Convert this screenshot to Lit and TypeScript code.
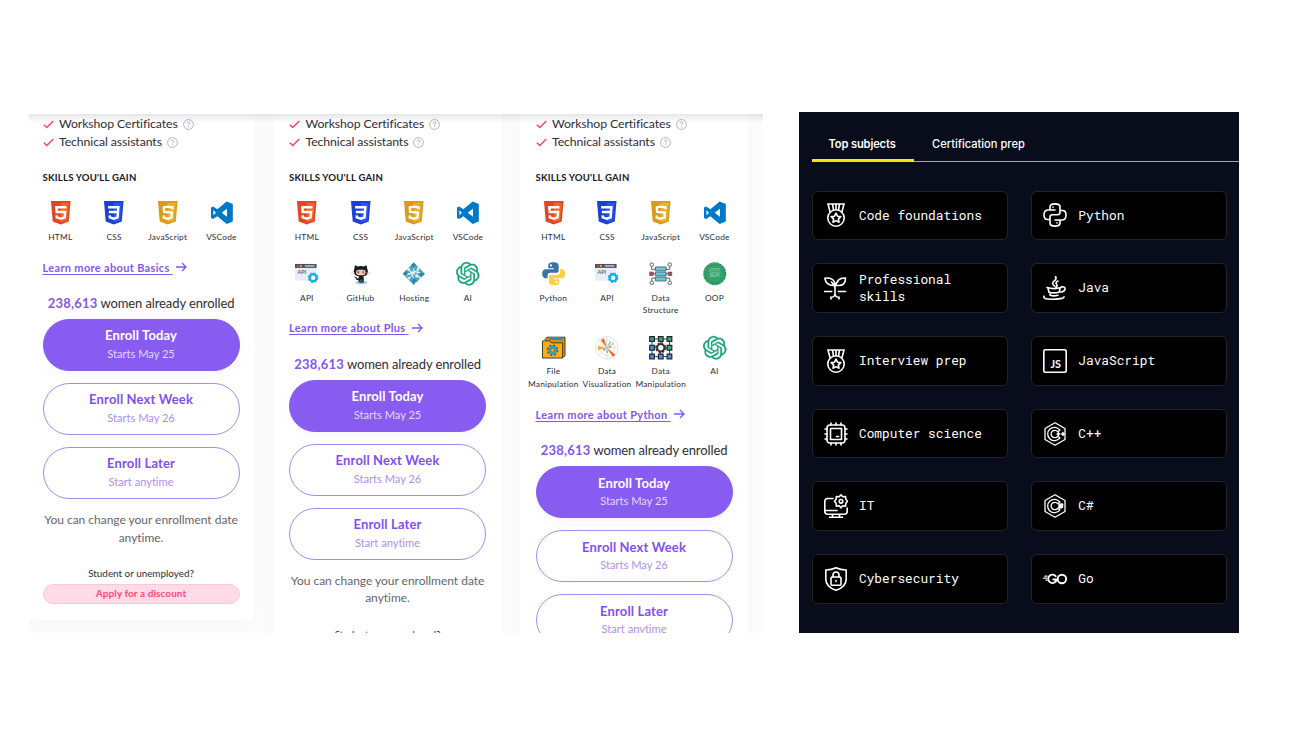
import { LitElement, html, css, svg, nothing } from "lit";
import { customElement, property } from "lit/decorators.js";

const shield = (dark: string, light: string, mark: unknown) => svg`
  <path fill=${dark} d="M2 0h20l-1.8 21L12 24l-8.200-3z"/>
  <path fill=${light} d="M12 1.800h8.200l-1.600 18L12 22z"/>
  ${mark}`;

const skillIcons: Record<string, unknown> = {
  html: shield("#e0461f", "#f0652a", svg`<path fill="none" stroke="#fff" stroke-width="2.500" d="M17.800 6.300H7.500l.4 5h8.600l-.5 5.400-4 1.300-4-1.300-.2-2"/>`),
  css: shield("#1c3fd6", "#2a55f0", svg`<path fill="none" stroke="#fff" stroke-width="2.500" d="M6.200 6.300h10.500l-.4 5H7M16.300 11l-.4 5.700-3.900 1.300-4-1.300-.2-2"/>`),
  js: shield("#dc9a1c", "#ebb02a", svg`<path fill="none" stroke="#fff" stroke-width="2.400" d="M16.800 8.300V6.400l-4.800-.7-4 .9.300 4.600 7.900.7-.4 5-3.900 1.200-4-1.200v-2"/>`),
  vscode: svg`<path fill="#0078c8" fill-rule="evenodd" d="M17 .5 23.300 3v18L17 23.500l-9.500-8L3.300 18.300 1 17.300V6.700l2.300-1 4.200 2.800zM17.300 8 12 12l5.300 4zM3.500 9.500v5L6 12z"/>`,
  api: svg`<path fill="#e9ecf4" d="M0 2h22v17H0z"/><path fill="#4c4d5c" d="M0 2h22v4H0z"/>
    <path fill="#e04848" d="M2 3h2v2H2z"/><path fill="#f1b13a" d="M5 3h2v2H5z"/><path fill="#a7acbd" d="M10 3h10v2H10z"/>
    <text x="2.500" y="12.500" font-size="5.500" font-weight="700" fill="#666879" font-family="Lato, sans-serif">API</text>
    <circle cx="18.500" cy="16" r="3.500" fill="#fff" stroke="#12b0e3" stroke-width="2.400"/>
    <circle cx="18.500" cy="16" r="4.700" fill="none" stroke="#12b0e3" stroke-width="1.400" stroke-dasharray="2 1.690"/>`,
  github: svg`<ellipse cx="12.500" cy="21" rx="6" ry="1.800" fill="#8fd3f2"/>
    <path fill="#161b22" d="M6 3.200 9 4.600q3-.8 6 0l3-1.400.6 3.600q1.700 2.800.2 5.400-1.200 2-4.300 2.500l.6 1.800v4.200H9.800v-2Q7 18.500 6.500 16l-1.500-1.300q2.600-.2 3.200 1.900l1.500.2.5-2.100Q6.500 14.200 5.400 12.200q-1.600-2.600.1-5.400z"/>
    <rect x="7.200" y="8" width="9.800" height="5.500" rx="2.500" fill="#f4cbb2"/>
    <ellipse cx="9.500" cy="10.400" rx="1" ry="1.500" fill="#ad5c51"/><ellipse cx="14.700" cy="10.400" rx="1" ry="1.500" fill="#ad5c51"/>
    <path stroke="#b8b8b8" stroke-width=".5" d="M1.500 10.300l4.500.4M2 12.500l4-.8M18 10.700l4.500-.4M18 11.700l4 .8"/>
    <path fill="#4a4f55" d="M11 18h3v3.500h-3z"/>`,
  hosting: svg`<path fill="#4fa3c4" d="M12 .5 23.500 12 12 23.500.5 12z"/>
    <path fill="none" stroke="#fff" stroke-width=".9" d="M5 7l14 10M7 17 17 6M12 1v9l-8 4M12 10l9 1M10 12l4 10M6 6l4 6-7 0M17 6l-2 8 5 2"/>
    <g fill="#e8f4fa"><circle cx="11" cy="11" r="1.600"/><circle cx="16.500" cy="7" r="1.300"/><circle cx="15" cy="14.500" r="1.300"/><circle cx="7" cy="16.500" r="1.200"/><circle cx="7" cy="7.500" r="1.200"/></g>
    <path fill="#2f83a8" d="M9 3.500l3-3 2 2-2 4zM1 12l3-3 2 3-2 2zM10 20l2-4 3 3-3 4zM19 10l4 2-3 3-2-2z"/>`,
  ai: svg`<path fill="#16a37c" stroke="#16a37c" stroke-width=".25" d="M22.2819 9.8211a5.9847 5.9847 0 0 0-.5157-4.9108 6.0462 6.0462 0 0 0-6.5098-2.9A6.0651 6.0651 0 0 0 4.9807 4.1818a5.9847 5.9847 0 0 0-3.9977 2.9 6.0462 6.0462 0 0 0 .7427 7.0966 5.98 5.98 0 0 0 .511 4.9107 6.051 6.051 0 0 0 6.5146 2.9001A5.9847 5.9847 0 0 0 13.2599 24a6.0557 6.0557 0 0 0 5.7718-4.2058 5.9894 5.9894 0 0 0 3.9977-2.9001 6.0557 6.0557 0 0 0-.7475-7.0729zm-9.022 12.6081a4.4755 4.4755 0 0 1-2.8764-1.0408l.1419-.0804 4.7783-2.7582a.7948.7948 0 0 0 .3927-.6813v-6.7369l2.02 1.1686a.071.071 0 0 1 .038.052v5.5826a4.504 4.504 0 0 1-4.4945 4.4944zm-9.6607-4.1254a4.4708 4.4708 0 0 1-.5346-3.0137l.142.0852 4.783 2.7582a.7712.7712 0 0 0 .7806 0l5.8428-3.3685v2.3324a.0804.0804 0 0 1-.0332.0615L9.74 19.9502a4.4992 4.4992 0 0 1-6.1408-1.6464zM2.3408 7.8956a4.485 4.485 0 0 1 2.3655-1.9728V11.6a.7664.7664 0 0 0 .3879.6765l5.8144 3.3543-2.0201 1.1685a.0757.0757 0 0 1-.071 0l-4.8303-2.7865A4.504 4.504 0 0 1 2.3408 7.872zm16.5963 3.8558L13.1038 8.364 15.1192 7.2a.0757.0757 0 0 1 .071 0l4.8303 2.7913a4.4944 4.4944 0 0 1-.6765 8.1042v-5.6772a.79.79 0 0 0-.407-.667zm2.0107-3.0231l-.142-.0852-4.7735-2.7818a.7759.7759 0 0 0-.7854 0L9.409 9.2297V6.8974a.0662.0662 0 0 1 .0284-.0615l4.8303-2.7866a4.4992 4.4992 0 0 1 6.6802 4.66zM8.3065 12.863l-2.02-1.1638a.0804.0804 0 0 1-.038-.0567V6.0742a4.4992 4.4992 0 0 1 7.3757-3.4537l-.142.0805L8.704 5.459a.7948.7948 0 0 0-.3927.6813zm1.0976-2.3654l2.602-1.4998 2.6069 1.4998v2.9994l-2.5974 1.4997-2.6067-1.4997Z"/>`,
  python: svg`<path fill="#3873a5" d="M11.800.2c-4.200 0-5.400 1.400-5.400 3.500v2.700H12v1H3.800C1.500 7.400.2 9.200.2 12.100s1.500 4.600 3.400 4.600h2.100v-2.900q0-2.800 2.900-2.800h5.800q2.600 0 2.600-2.700V3.900C17 1.300 15 .2 11.800.2z"/>
    <path fill="#fcd244" d="M12.200 23.800c4.200 0 5.400-1.400 5.400-3.500v-2.700H12v-1h8.200c2.300 0 3.600-1.800 3.600-4.700s-1.500-4.600-3.400-4.600h-2.100v2.900q0 2.800-2.900 2.800H9.600q-2.600 0-2.600 2.700v4.400c0 2.600 2 3.700 5.200 3.700z"/>
    <circle cx="9.200" cy="3.500" r="1.100" fill="#fff"/><circle cx="14.800" cy="20.500" r="1.100" fill="#fff"/>`,
  structure: svg`<g fill="none" stroke="#59606c" stroke-width="1"><circle cx="2.800" cy="2.700" r="1.800"/><circle cx="21.200" cy="2.700" r="1.800"/><circle cx="2.800" cy="21.300" r="1.800"/><circle cx="21.200" cy="21.300" r="1.800"/>
    <path d="M2.800 4.500v3H7M21.200 4.500v3H17M2.800 19.500v-3H7M21.200 19.500v-3H17M4 12h16"/></g>
    <g stroke="#4a5560" stroke-width=".8"><path fill="#6cc5d8" d="M6.500 5h11v4h-11zM6.500 10.200h11v4h-11zM6.500 15.400h11v4h-11z"/><path fill="#d9414f" d="M.8 10.300h3.500v3.500H.8zM19.700 10.300h3.500v3.500h-3.500z"/></g>`,
  oop: svg`<circle cx="12" cy="12" r="10.800" fill="#35a16d"/><circle cx="12" cy="12" r="11" fill="none" stroke="#279060" stroke-width="1.500" stroke-dasharray="3 .5"/>
    <circle cx="12" cy="12" r="9" fill="none" stroke="#2c915f" stroke-width=".7"/>
    <path fill="none" stroke="#8fd0ae" stroke-width=".8" d="M6.500 7h11M6.500 9h2M9.800 9h2M13 9h1.500M16 9h1.500M7 11.200h10M7.500 12.800h2.500v2H7.500zM11 12.800v2h2v-2M14.200 14.800v-2h2.300v2"/>`,
  file: svg`<path fill="#d98c12" stroke="#453a28" d="M3 3.500 5 1.200h18.500v19L21 22z"/><path fill="#2f90a8" d="M7 1h14v3H7z"/>
    <path fill="#fbae17" stroke="#453a28" d="M.5 5H8l1.500 2H21v15.500H.5z"/>
    <circle cx="10.700" cy="14.500" r="3.500" fill="#fbae17" stroke="#2aa5c9" stroke-width="2.400"/><circle cx="10.700" cy="14.500" r="5.200" fill="none" stroke="#28546b" stroke-width="1.300" stroke-dasharray="2.200 1.880"/><circle cx="10.700" cy="14.500" r="2" fill="none" stroke="#28546b" stroke-width=".6"/>`,
  viz: svg`<g fill="none" stroke="#d8d8d8" stroke-width=".7"><circle cx="12" cy="12" r="11.500"/><circle cx="12" cy="12" r="7.600"/><circle cx="12" cy="12" r="3.800"/><path d="M0.500 12h23M12 .5v23M3.900 3.900l16.200 16.200M20.100 3.900 3.900 20.100"/></g>
    <path fill="#f0682b" d="M12 12 6 4.300l3-2.300zM12 12l8.700 7.200-2.500 2.300z"/><path fill="#f3b63a" d="M12 12 3 10v4.800z"/><path fill="#7bc67a" d="m12 12 3-6.500 1.400 1.100zM12 12l-.3 5.500 1.800-.3z"/><path fill="#4b87c3" d="m12 12 4.500-2 .2 1.500zM12 12l-3 3-1-1z"/><path fill="#f3b63a" d="m12 12 7-5 .6 1z"/>`,
  data: svg`<path fill="none" stroke="#33373d" d="M3 3h18v18H3zM12 3v18M3 12h18"/>
    <g stroke="#22262b" stroke-width="1.200"><path fill="#2cae75" d="M.7.7h4.800v4.800H.7zM9.600.7h4.800v4.800H9.600zM18.500.7h4.800v4.800h-4.800zM18.500 9.600h4.800v4.800h-4.800z"/>
    <path fill="#4a8eea" d="M.7 9.600h4.800v4.800H.7zM.7 18.500h4.800v4.800H.7zM9.600 18.500h4.800v4.800H9.600zM18.500 18.500h4.800v4.800h-4.800z"/></g>
    <circle cx="12" cy="12" r="3.700" fill="#fff" stroke="#2b2e33" stroke-width="2"/><circle cx="12" cy="12" r="5" fill="none" stroke="#2b2e33" stroke-width="1.300" stroke-dasharray="2 1.920"/>`,
};

const medal = svg`<path d="M3.700 1h16.600M4 1l2 7.500M20 1l-2 7.500M8.500 1l1 6M15.500 1l-1 6M12 1v5.500"/><circle cx="12" cy="15" r="8.200"/>
  <path d="m12 10.200 1.500 3 3.300.4-2.400 2.300.6 3.300-3-1.600-3 1.600.6-3.300-2.400-2.300 3.300-.4z"/>`;
const hexC = svg`<path stroke-width="1.300" d="M12 .8 22 6.500v11L12 23.200 2 17.500v-11zM16.900 8.200a6.700 6.700 0 1 0 0 7.600M14.700 9.700a3.700 3.700 0 1 0 0 4.600M16.900 8.200l-2.200 1.500M16.900 15.800l-2.200-1.500"/>`;

const subjectIcons: Record<string, unknown> = {
  medal,
  plant: svg`<path d="M11 19.500V10.500Q11 7.500 14 5.500M11 11.500Q10 8.500 7.500 6M10.500 9.500Q2 10 .8 2.200 8.500 1.200 10.500 6.300v3.200zM12 9.500Q13 1.500 21.500 2q0 8-7.500 7.500zM.5 15.500h7.200M14.300 15.500h7.200M11 18q-.5 3.300-4 3.300M7 21v2M11 18q.5 3.300 4 3.300M15 21v2"/>`,
  chip: svg`<rect x="3" y="3" width="18" height="18" rx="3"/><path d="M7 6.500h10.500v11H6.500V7zM12.500 14.500h2M7 1V3M12 1V3M17 1V3M7 21v2M12 21v2M17 21v2M1 7H3M1 12H3M1 17H3M21 7h2M21 12h2M21 17h2"/>`,
  desktop: svg`<path d="M9 4.500H3.800Q.8 4.500.8 7.500v9.700q0 3 3 3h16.400q3 0 3-3V14M1 16.500h12M8.500 20.200v3M15.500 20.200v3M5.500 23.300h13"/>
    <path d="m17 .8 1.800 2 2.800-.3.300 2.800 1.600 2-1.600 2-.3 2.800-2.800-.3-1.800 2-1.800-2-2.800.3-.3-2.800-1.600-2 1.600-2 .3-2.800 2.800.3z"/><circle cx="17" cy="7.300" r="1.800"/>`,
  lock: svg`<path d="M12 .8Q16.500 3 22.200 3v9q0 8-10.200 11.300Q1.800 20 1.800 12V3Q7.500 3 12 .8z"/><rect x="7" y="10" width="10" height="8.200" rx="1"/><path d="M9 10V8a3 3 0 0 1 6 0v2M12 13.500v1"/>`,
  python: svg`<path d="M12 7H4.500Q1 7.500 1 12t3.500 4.500H7V14q0-2.200 2.500-2.200h5Q17 11.500 17 9.500v-6Q16.500.9 12 .9T7 3.500V7M12 17h7.500Q23 16.500 23 12t-3.500-4.500H17M7 16v4.500q.5 2.600 5 2.600t5-2.600V17M10 4v.3M14 19.700v.3"/>`,
  java: svg`<path d="M12.500.5Q14 3 11 5.200T11.500 10M15 5q-3 1.500-1.500 3.200T13 11M4 11.500q7 2.200 14 0M5 12.300l1 4Q11 17.500 16 16.300l1.300-4.500M18 11q4.500-.8 4 2.200T17.500 16M7 18q-.5 1.200 1 1.500 3 .8 7-.3M1 20.200Q0 22.700 5 23q8 .7 14-.6 2-.6 2-1.500"/>`,
  js: svg`<rect x=".8" y=".8" width="22.400" height="22.400" rx="1.500"/><text x="7.500" y="18.800" font-size="11.500" font-weight="700" textLength="10.500" lengthAdjust="spacingAndGlyphs" fill="#fff" stroke="none" font-family="Lato, sans-serif">JS</text>`,
  cpp: svg`${hexC}<path stroke-width="1.500" d="M14 12h2.800M15.400 10.600v2.800M18.600 12h2.800M20 10.600v2.800"/>`,
  csharp: svg`${hexC}<path stroke-width="1.100" d="m17 9.800-.5 4.400M19 9.600l-.5 4.400M15.500 11h4.500M15.300 13h4.500"/><path fill="#fff" d="m16.500 10.500 3-.2-.4 3.200-3 .2z"/>`,
  go: svg`<path stroke-width="1.900" d="M12.700 9.200a4.200 4.200 0 1 0 .9 3.300h-3.300"/><ellipse cx="18.900" cy="12" rx="4.200" ry="4.200" stroke-width="1.900"/><path stroke-width="1.200" d="M2 9.200h2M.5 11.200h3M3 13.200h.8"/>`,
};

type Skill = [icon: string, label: string];
const base: Skill[] = [["html", "HTML"], ["css", "CSS"], ["js", "JavaScript"], ["vscode", "VSCode"]];
const plans: { name: string; skills: Skill[] }[] = [
  { name: "Basics", skills: base },
  { name: "Plus", skills: [...base, ["api", "API"], ["github", "GitHub"], ["hosting", "Hosting"], ["ai", "AI"]] },
  { name: "Python", skills: [...base, ["python", "Python"], ["api", "API"], ["structure", "Data Structure"], ["oop", "OOP"],
    ["file", "File Manipulation"], ["viz", "Data Visualization"], ["data", "Data Manipulation"], ["ai", "AI"]] },
];

const subjects: [string, string][] = [
  ["medal", "Code foundations"], ["python", "Python"],
  ["plant", "Professional skills"], ["java", "Java"],
  ["medal", "Interview prep"], ["js", "JavaScript"],
  ["chip", "Computer science"], ["cpp", "C++"],
  ["desktop", "IT"], ["csharp", "C#"],
  ["lock", "Cybersecurity"], ["go", "Go"],
];

@customElement("plan-card")
class PlanCard extends LitElement {
  @property() name = "";
  @property({ attribute: false }) skills: Skill[] = [];

  static styles = css`
    :host { display: block; box-sizing: border-box; width: 228.5px; padding: 1.700px 15.600px 16px 15.800px; background: #fff; border-radius: 0 0 6px 6px; box-shadow: 0 4px 14px rgba(0,0,0,.014); color: #2d2d39; }
    .feature { display: flex; align-items: center; height: 18px; font-size: 12.300px; line-height: 16px; letter-spacing: -.1px; }
    .feature span { margin-top: -.4px; }
    .check { width: 11px; height: 9px; margin-right: 5.500px; }
    .help { width: 11px; height: 11px; margin-left: 5px; }
    .heading { margin: 19.800px 0 15.700px; font-size: 9.600px; line-height: 14px; font-weight: 700; letter-spacing: .2px; color: #17171f; }
    .skills { display: grid; grid-template-columns: repeat(4, 53.700px); row-gap: 18.100px; margin: 0 -9px; }
    .skill { display: flex; flex-direction: column; align-items: center; }
    .icon { width: 23.500px; height: 23.500px; margin: .3px 0 5.900px; overflow: visible; }
    .label { width: 53px; display: flex; flex-direction: column; align-items: center; font-size: 8.300px; line-height: 12.900px; letter-spacing: .22px; }
    .more { display: flex; align-items: center; height: 18px; margin-top: 14.400px; font-size: 11px; font-weight: 700; letter-spacing: .33px; color: #8257ee; }
    .link { text-decoration: underline; text-underline-offset: 2px; white-space: pre; }
    .arrow { width: 11px; height: 10px; margin-left: 3px; }
    .count { margin: 17px -5px 6px; text-align: center; font-size: 13px; line-height: 20px; letter-spacing: -.1px; white-space: nowrap; }
    .count b { color: #8257ee; letter-spacing: .2px; }
    .button { box-sizing: border-box; height: 51.700px; margin-bottom: 12.300px; border: 1px solid #a98af3; border-radius: 26px; padding-top: 7.200px; text-align: center; line-height: 17.600px; font-size: 11.200px; letter-spacing: -.05px; color: #ad8ff3; }
    .button b { display: block; font-size: 13px; letter-spacing: .15px; color: #8050ee; }
    .main { background: #885cf1; border-color: #885cf1; color: #e2d7fc; box-shadow: 0 4px 14px rgba(120,90,220,.055); }
    .main b { color: #fff; }
    .note { text-align: center; margin: 12px -4px 20px; font-size: 12px; line-height: 17.500px; letter-spacing: -.02px; white-space: nowrap; color: #65656d; }
    .student { text-align: center; font-size: 9.900px; line-height: 14px; letter-spacing: 0; }
    .discount { box-sizing: border-box; height: 19.600px; margin-top: 4px; border: 1px solid #ffc8d9; border-radius: 10px; background: #ffdbe7; color: #fb4a7c; text-align: center; font-size: 10px; line-height: 17.500px; font-weight: 700; letter-spacing: .08px; }
  `;

  private feature(text: string) {
    return html`<div class="feature">
      <svg class="check" viewBox="0 0 11 9"><path d="M.8 4.800 3.800 7.600 10.300 1" fill="none" stroke="#f6406c" stroke-width="1.400"/></svg><span>${text}</span>
      <svg class="help" viewBox="0 0 11 11" fill="none" stroke="#aaaab0" stroke-width=".9"><circle cx="5.500" cy="5.500" r="4.900"/><path d="M4.100 4.500Q4.200 3 5.500 3t1.400 1.300q0 .8-1.400 1.500v.6M5.500 7.400v.9"/></svg>
    </div>`;
  }

  render() {
    return html`
      ${this.feature("Workshop Certificates")}${this.feature("Technical assistants")}
      <div class="heading">SKILLS YOU'LL GAIN</div>
      <div class="skills">${this.skills.map(([icon, label]) => html`<div class="skill">
        <svg class="icon" viewBox="0 0 24 24">${skillIcons[icon]}</svg>
        <div class="label">${label.split(" ").map((w) => html`<span>${w}</span>`)}</div></div>`)}</div>
      <div class="more"><span class="link">Learn more about ${this.name} </span>
        <svg class="arrow" viewBox="0 0 11 10"><path d="M0 5h10M6 1l4 4-4 4" fill="none" stroke="#8257ee" stroke-width="1.300"/></svg></div>
      <div class="count"><b>238,613</b> women already enrolled</div>
      <div class="button main"><b>Enroll Today</b>Starts May 25</div>
      <div class="button"><b>Enroll Next Week</b>Starts May 26</div>
      <div class="button"><b>Enroll Later</b>Start anytime</div>
      <div class="note">You can change your enrollment date<br>anytime.</div>
      <div class="student">Student or unemployed?</div>
      <div class="discount">Apply for a discount</div>`;
  }
}

@customElement("subject-catalog")
class SubjectCatalog extends LitElement {
  static styles = css`
    :host { display: block; box-sizing: border-box; width: 440px; height: 521px; padding: 29.500px 0 0 12.500px; background: #090c1b; color: #fff; }
    .tabs { display: flex; height: 19px; border-bottom: 1.500px solid #a5a7ad; font: 500 11.100px/2 Inter, sans-serif; }
    .tab { box-sizing: border-box; height: 19px; padding: 0 18px; line-height: 4px; white-space: nowrap; }
    .active { width: 102.500px; height: 20px; padding: 0 17px; border-bottom: 3px solid #ffe000; font-weight: 600; letter-spacing: -.12px; }
    .grid { display: grid; grid-template-columns: 196px 196px; gap: 23.200px 23.300px; padding-top: 29.200px; }
    .card { box-sizing: border-box; display: flex; align-items: center; height: 49.500px; padding-left: 11.500px; border: 1px solid #222329; border-radius: 6px; background: #000; font: 12.800px/17.500px "Roboto Mono", "Liberation Mono", monospace; }
    .icon { flex: none; width: 24px; height: 24px; margin-right: 11px; fill: none; stroke: #fff; stroke-width: 1.600; stroke-linejoin: round; stroke-linecap: round; }
    .name { width: 130px; }
  `;
  render() {
    return html`<div class="tabs"><div class="tab active">Top subjects</div><div class="tab">Certification prep</div></div>
      <div class="grid">${subjects.map(([icon, name]) => html`<div class="card">
        <svg class="icon" viewBox="0 0 24 24">${subjectIcons[icon] ?? nothing}</svg><span class="name">${name}</span></div>`)}</div>`;
  }
}

@customElement("app-root")
class AppRoot extends LitElement {
  static styles = css`
    :host { display: flex; box-sizing: border-box; width: 1292px; height: 746px; padding: 112px 0 0 29px; background: #fff; font-family: Lato, sans-serif; overflow: hidden; }
    .plans { box-sizing: border-box; display: flex; flex: none; align-items: flex-start; gap: 18px; width: 734px; height: 519px; margin: 2px 36px 0 0; padding: 0; background: #fbfbfb; overflow: hidden; position: relative; }
    .plans::after { content: ""; position: absolute; inset: 0 0 auto; height: 9px; background: linear-gradient(rgba(60,60,80,.12), rgba(60,60,80,0)); }
    .card { flex: none; }
    .card:first-child { margin-left: -2.300px; }
    .catalog { flex: none; }
  `;
  render() {
    return html`<div class="plans">${plans.map((p) => html`<plan-card class="card" .name=${p.name} .skills=${p.skills}></plan-card>`)}</div>
      <subject-catalog class="catalog"></subject-catalog>`;
  }
}
